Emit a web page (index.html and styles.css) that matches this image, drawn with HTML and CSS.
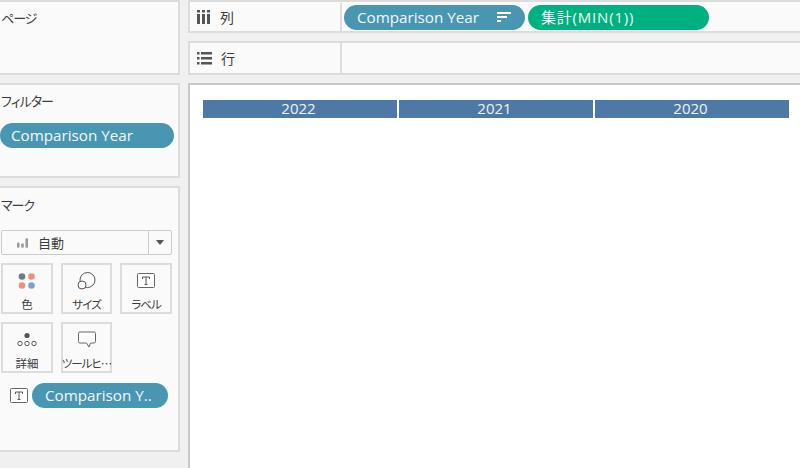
FILE: index.html
```html
<!DOCTYPE html>
<html>
<head>
    <meta charset="utf-8">
    <title>Sheet</title>
    <link rel="stylesheet" href="styles.css">
</head>
<body>
<div class="side">
    <div class="card pages"><div class="title">ページ</div></div>
    <div class="card filters">
        <div class="title">フィルター</div>
        <div class="pill blue filter-pill">Comparison Year</div>
    </div>
    <div class="card marks">
        <div class="title">マーク</div>
        <div class="select">
            <div class="select-main">
                <svg width="11" height="10" viewBox="0 0 13 11"><rect x="0" y="5" width="3" height="6" rx="1" fill="#999"/><rect x="5" y="6" width="3" height="5" rx="1" fill="#999"/><rect x="10" y="0" width="3" height="11" rx="1" fill="#999"/></svg>
                <span>自動</span>
            </div>
            <div class="select-arrow"><i></i></div>
        </div>
        <div class="mark-grid">
            <div class="mark-btn">
                <svg width="18" height="17" viewBox="0 0 18 17"><circle cx="4" cy="4" r="3.3" fill="#6e7a8c"/><circle cx="13.5" cy="4" r="3.3" fill="#f28e7c"/><circle cx="4" cy="13" r="3.3" fill="#f28e7c"/><circle cx="13.5" cy="13" r="3.3" fill="#7ba3cc"/></svg>
                <span>色</span>
            </div>
            <div class="mark-btn">
                <svg width="19" height="18" viewBox="0 0 19 18" fill="none" stroke="#555" stroke-width="1"><circle cx="10.5" cy="8" r="7.5"/><circle cx="5" cy="13" r="4" fill="#fafafa"/></svg>
                <span class="kana">サイズ</span>
            </div>
            <div class="mark-btn">
                <svg width="18" height="16" viewBox="0 0 18 16"><rect x="0.5" y="0.5" width="17" height="14" rx="1" fill="#fff" stroke="#666"/><path d="M5.5 4h7v2M9 4v7.5M7.5 11.5h3M5.5 4v2" fill="none" stroke="#555"/></svg>
                <span class="kana">ラベル</span>
            </div>
            <div class="mark-btn">
                <svg width="20" height="17" viewBox="0 0 20 17" fill="none" stroke="#555"><circle cx="10" cy="4" r="2.6" fill="#555" stroke="none"/><circle cx="3" cy="12" r="2.2"/><circle cx="10" cy="12" r="2.2"/><circle cx="17" cy="12" r="2.2"/></svg>
                <span>詳細</span>
            </div>
            <div class="mark-btn">
                <svg width="18" height="17" viewBox="0 0 18 17"><path d="M2 .5h14a1.5 1.5 0 0 1 1.5 1.500v8a1.500 1.500 0 0 1-1.500 1.500h-3.500l-1.500 4-2.500-4H2A1.500 1.500 0 0 1 .5 10V2A1.500 1.500 0 0 1 2 .5z" fill="#fff" stroke="#666"/></svg>
                <span class="kana">ツールヒ…</span>
            </div>
        </div>
        <div class="mark-field">
            <svg width="18" height="16" viewBox="0 0 18 16"><rect x="0.5" y="0.5" width="17" height="14" rx="1" fill="#fff" stroke="#666"/><path d="M5.500 4h7v2M9 4v7.500M7.500 11.500h3M5.500 4v2" fill="none" stroke="#555"/></svg>
            <div class="pill blue field-pill">Comparison Y..</div>
        </div>
    </div>
</div>
<div class="main">
    <div class="shelf shelf-cols">
        <div class="shelf-label">
            <svg width="14" height="14" viewBox="0 0 14 14" fill="#555"><rect x="0" y="0" width="3" height="2.500"/><rect x="0" y="4" width="3" height="10"/><rect x="5" y="0" width="3" height="2.500"/><rect x="5" y="4" width="3" height="10"/><rect x="10" y="0" width="3" height="2.500"/><rect x="10" y="4" width="3" height="10"/></svg>
            <span>列</span>
        </div>
        <div class="shelf-body">
            <div class="pill blue col-pill">
                <span>Comparison Year</span>
                <svg width="14" height="11" viewBox="0 0 14 11" fill="#fff"><rect x="0" y="0" width="14" height="2"/><rect x="0" y="4" width="10" height="2"/><rect x="0" y="8" width="4" height="2"/></svg>
            </div>
            <div class="pill green agg-pill">集計(MIN(1))</div>
        </div>
    </div>
    <div class="shelf shelf-rows">
        <div class="shelf-label">
            <svg width="15" height="13" viewBox="0 0 15 13" fill="#555"><rect x="0" y="0" width="2.500" height="2.500"/><rect x="4" y="0" width="11" height="2.500"/><rect x="0" y="5" width="2.500" height="2.500"/><rect x="4" y="5" width="11" height="2.500"/><rect x="0" y="10" width="2.500" height="2.500"/><rect x="4" y="10" width="11" height="2.500"/></svg>
            <span>行</span>
        </div>
        <div class="shelf-body"></div>
    </div>
    <div class="canvas">
        <div class="years">
            <div class="year">2022</div>
            <div class="year">2021</div>
            <div class="year">2020</div>
        </div>
    </div>
</div>
</body>
</html>
```
FILE: styles.css
```css
html, body {
    height: 100%;
}
body {
    margin: 0;
    display: flex;
    gap: 8px;
    height: 468px;
    overflow: hidden;
    background: #f0f0f0;
    font-family: "Noto Sans CJK JP", "Open Sans", sans-serif;
    font-feature-settings: "palt";
    color: #3c3c3c;
}
.side {
    width: 180px;
    flex: none;
    display: flex;
    flex-direction: column;
    gap: 8px;
}
.card {
    box-sizing: border-box;
    background: #fafafa;
    border: 2px solid #dcdcdc;
    border-left: 0;
}
.pages {
    height: 75px;
}
.filters {
    height: 95px;
}
.marks {
    height: 266px;
}
.title {
    font-size: 13px;
    line-height: 18px;
    letter-spacing: -1px;
    padding: 7px 0 0 1px;
}
.marks .title {
    padding-top: 8px;
}
.pill {
    box-sizing: border-box;
    height: 25px;
    border-radius: 13px;
    color: #f4f8fa;
    font-family: "Open Sans", "Noto Sans CJK JP", sans-serif;
    font-size: 15.2px;
    line-height: 25px;
    white-space: nowrap;
}
.blue {
    background: #4996b2;
}
.green {
    background: #00b180;
}
.filter-pill {
    width: 174px;
    margin-top: 13px;
    padding-left: 11px;
}
.select {
    display: flex;
    width: 171px;
    height: 25px;
    box-sizing: border-box;
    margin: 16px 0 0 1px;
    background: #fafafa;
    border: 1px solid #ccc;
    border-radius: 2px;
}
.select-main {
    flex: 1;
    display: flex;
    align-items: center;
    gap: 10px;
    padding-left: 15px;
    font-size: 13px;
}
.select-arrow {
    width: 22px;
    border-left: 1px solid #ccc;
    display: flex;
    align-items: center;
    justify-content: center;
}
.select-arrow i {
    border: 4.5px solid transparent;
    border-top: 5px solid #555;
    border-bottom: 0;
}
.mark-grid {
    display: grid;
    grid-template-columns: 52px 51px 52px;
    grid-auto-rows: 51px;
    column-gap: 8px;
    row-gap: 8px;
    margin: 8px 0 0 1px;
}
.mark-btn {
    box-sizing: border-box;
    background: #fafafa;
    border: 2px solid #dcdcdc;
    display: flex;
    flex-direction: column;
    align-items: center;
    padding-top: 7px;
    font-size: 11.5px;
    line-height: 16px;
    white-space: nowrap;
}
.mark-btn svg {
    height: 18px;
    margin-bottom: 6px;
    flex: none;
}
.kana {
    letter-spacing: -1px;
}
.mark-field {
    display: flex;
    align-items: center;
    gap: 4px;
    margin: 10px 0 0 10px;
}
.field-pill {
    width: 136px;
    padding-left: 13px;
}
.main {
    flex: 1;
    display: flex;
    flex-direction: column;
    gap: 8px;
}
.shelf {
    display: flex;
    box-sizing: border-box;
    height: 34px;
    background: #fafafa;
    border: 2px solid #dcdcdc;
    border-right: 0;
}
.shelf-cols {
    height: 33px;
    padding-top: 1px;
}
.shelf-label {
    width: 152px;
    flex: none;
    box-sizing: border-box;
    border-right: 2px solid #dcdcdc;
    display: flex;
    align-items: center;
    gap: 9px;
    padding-left: 7px;
    font-size: 14px;
}
.shelf-body {
    flex: 1;
    display: flex;
    align-items: center;
    gap: 3px;
    padding-left: 2px;
}
.col-pill {
    width: 181px;
    display: flex;
    align-items: center;
    justify-content: space-between;
    padding: 0 14px 0 13px;
}
.agg-pill {
    width: 181px;
    padding-left: 13px;
    font-size: 15px;
    letter-spacing: 0.8px;
}
.canvas {
    flex: 1;
    background: #fff;
    border: 2px solid #c8c8c8;
    border-right: 0;
    border-bottom: 0;
    padding: 15px 0 0 13px;
}
.years {
    display: flex;
    gap: 2px;
    width: 586px;
}
.year {
    flex: 1;
    height: 18px;
    padding-right: 3px;
    background: #4e79a7;
    color: #f0f4f8;
    font-family: "Open Sans", sans-serif;
    font-size: 15px;
    line-height: 17px;
    text-align: center;
}
```
